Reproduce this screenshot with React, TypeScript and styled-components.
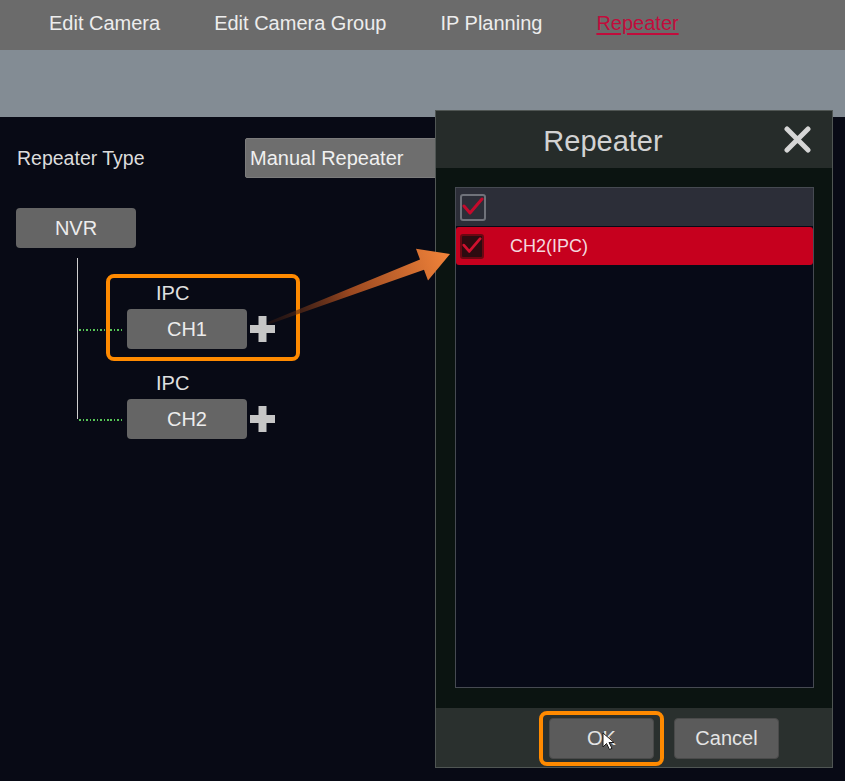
import styled, { createGlobalStyle } from "styled-components";

const GlobalStyle = createGlobalStyle`
  html,
  body {
    margin: 0;
    padding: 0;
    background: #080a15;
  }

  body {
    font-family: "Liberation Sans", Arial, sans-serif;
  }
`;

const ORANGE = "#ff8a00";
const TEXT = "#e6e6e6";

const Screen = styled.div`
  position: relative;
  width: 845px;
  height: 781px;
  overflow: hidden;
  background: #080a15;
  color: ${TEXT};
`;

const TabBar = styled.nav`
  display: flex;
  align-items: center;
  gap: 54px;
  height: 50px;
  padding: 0 0 3px 49px;
  box-sizing: border-box;
  background: #6b6b6b;
`;

const Tab = styled.span<{ $active?: boolean }>`
  font-size: 20px;
  color: ${({ $active }) => ($active ? "#c20c3c" : "#ededed")};
  text-decoration: ${({ $active }) => ($active ? "underline" : "none")};
  text-underline-offset: 3px;
`;

const SubBar = styled.div`
  height: 67px;
  background: #838c94;
`;

const Content = styled.section`
  padding-top: 21px;
`;

const TypeRow = styled.div`
  display: flex;
  align-items: center;
  height: 40px;
  padding-left: 17px;
`;

const TypeLabel = styled.span`
  width: 228px;
  font-size: 19.5px;
  color: #dcdcdc;
`;

const Select = styled.div`
  display: flex;
  align-items: center;
  width: 220px;
  height: 40px;
  box-sizing: border-box;
  padding-left: 4px;
  border: 1px solid #7c7c7c;
  border-radius: 2px;
  background: #6e6e6e;
  font-size: 20px;
  color: #f0f0f0;
`;

const NodeButton = styled.div<{ $indent?: number }>`
  display: flex;
  align-items: center;
  justify-content: center;
  width: 120px;
  height: 40px;
  margin-left: ${({ $indent }) => $indent ?? 0}px;
  border-radius: 4px;
  background: #656565;
  font-size: 20px;
  color: #ececec;
`;

const RootNode = styled(NodeButton)`
  margin-top: 30px;
`;

const Tree = styled.div`
  display: flex;
  margin: 10px 0 0 77px;
`;

const Rail = styled.div`
  width: 1px;
  margin-bottom: 20px;
  background: #cfcfcf;
`;

const Branches = styled.div`
  display: flex;
  flex-direction: column;
  gap: 24px;
  padding-top: 25px;
`;

const Branch = styled.div`
  display: flex;
  flex-direction: column;
  gap: 6px;
`;

const BranchLabel = styled.span`
  padding-left: 78px;
  font-size: 20px;
  line-height: 20px;
  color: #e0e0e0;
`;

const BranchRow = styled.div`
  display: flex;
  align-items: center;
`;

const Dots = styled.div`
  width: 43px;
  height: 2px;
  margin: 1px 5px 0 1px;
  background-image: repeating-linear-gradient(
    to right,
    #56c456 0 1.5px,
    transparent 1.5px 3.5px
  );
`;

const AddIcon = styled.svg`
  margin-left: 3px;
`;

const Highlight = styled.div`
  position: absolute;
  left: 106px;
  top: 274px;
  width: 194px;
  height: 87px;
  box-sizing: border-box;
  border: 4px solid ${ORANGE};
  border-radius: 8px;
  pointer-events: none;
`;

const Pointer = styled.svg`
  position: absolute;
  left: 260px;
  top: 240px;
  pointer-events: none;
`;

const Dialog = styled.div`
  position: absolute;
  left: 435px;
  top: 110px;
  display: flex;
  flex-direction: column;
  width: 398px;
  height: 658px;
  box-sizing: border-box;
  border: 1px solid #505654;
  background: #0b1411;
`;

const DialogHeader = styled.header`
  display: flex;
  align-items: center;
  height: 57px;
  background: #262c2a;
`;

const DialogTitle = styled.h2`
  flex: 1;
  margin: 3px 0 0;
  text-align: center;
  font-size: 29px;
  font-weight: normal;
  color: #d2d2d2;
`;

const CloseIcon = styled.svg`
  margin: 0 21px 0 14px;
`;

const DialogBody = styled.div`
  flex: 1;
  padding: 19px 18px 20px 19px;
`;

const ChannelList = styled.div`
  display: flex;
  flex-direction: column;
  gap: 1px;
  height: 100%;
  box-sizing: border-box;
  border: 1px solid #464a52;
  background: #070a17;
`;

const ListRow = styled.div<{ $selected?: boolean }>`
  display: flex;
  align-items: center;
  gap: 26px;
  height: 38px;
  padding-left: 4px;
  border-radius: ${({ $selected }) => ($selected ? "3px" : "0")};
  background: ${({ $selected }) => ($selected ? "#c6001e" : "#2c2e38")};
  font-size: 18px;
  color: #f4d8de;
`;

const CheckBox = styled.span<{ $selected?: boolean }>`
  display: flex;
  align-items: center;
  justify-content: center;
  width: ${({ $selected }) => ($selected ? 24 : 26)}px;
  height: ${({ $selected }) => ($selected ? 25 : 27)}px;
  box-sizing: border-box;
  border: 2px solid ${({ $selected }) => ($selected ? "#6a0812" : "#6f727a")};
  border-radius: 3px;
  background: ${({ $selected }) => ($selected ? "#2c0b10" : "#2c2e38")};
`;

const DialogFooter = styled.footer`
  display: flex;
  align-items: center;
  justify-content: flex-end;
  gap: 10px;
  height: 59px;
  padding: 2px 53px 0 0;
  box-sizing: border-box;
  background: #2a302e;
`;

const FocusRing = styled.div`
  position: relative;
  padding: 3px 6px;
  border: 4px solid ${ORANGE};
  border-radius: 8px;
`;

const DialogButton = styled.button`
  width: 105px;
  height: 41px;
  padding: 0;
  border: 1px solid #4a4a4a;
  border-radius: 4px;
  background: #5b5b5b;
  font-family: inherit;
  font-size: 20px;
  color: #e4e4e4;
`;

const Cursor = styled.svg`
  position: absolute;
  left: 59px;
  top: 17px;
  pointer-events: none;
`;

const Check = ({ color }: { color: string }) => (
  <svg width="22" height="20" viewBox="0 0 22 20">
    <polyline
      points="2,9 8,16 20,2"
      fill="none"
      stroke={color}
      strokeWidth="3"
      strokeLinecap="round"
      strokeLinejoin="round"
    />
  </svg>
);

const Add = () => (
  <AddIcon width="25" height="26" viewBox="0 0 25 26">
    <rect x="8.5" y="0" width="8" height="26" fill="#c6c6c6" />
    <rect x="0" y="9" width="25" height="8" fill="#c6c6c6" />
  </AddIcon>
);

const channels = [{ name: "CH1" }, { name: "CH2" }];

const tabs = ["Edit Camera", "Edit Camera Group", "IP Planning", "Repeater"];

export default function App() {
  return (
    <>
      <GlobalStyle />
      <Screen>
        <TabBar>
          {tabs.map((tab) => (
            <Tab key={tab} $active={tab === "Repeater"}>
              {tab}
            </Tab>
          ))}
        </TabBar>
        <SubBar />

        <Content>
          <TypeRow>
            <TypeLabel>Repeater Type</TypeLabel>
            <Select>Manual Repeater</Select>
          </TypeRow>

          <RootNode $indent={16}>NVR</RootNode>

          <Tree>
            <Rail />
            <Branches>
              {channels.map((ch) => (
                <Branch key={ch.name}>
                  <BranchLabel>IPC</BranchLabel>
                  <BranchRow>
                    <Dots />
                    <NodeButton>{ch.name}</NodeButton>
                    <Add />
                  </BranchRow>
                </Branch>
              ))}
            </Branches>
          </Tree>
        </Content>

        <Highlight />

        <Dialog>
          <DialogHeader>
            <DialogTitle>Repeater</DialogTitle>
            <CloseIcon width="27" height="27" viewBox="0 0 27 27">
              <path
                d="M3 3 L24 24 M24 3 L3 24"
                stroke="#d6d6d6"
                strokeWidth="5"
                strokeLinecap="round"
              />
            </CloseIcon>
          </DialogHeader>

          <DialogBody>
            <ChannelList>
              <ListRow>
                <CheckBox>
                  <Check color="#c40a2c" />
                </CheckBox>
              </ListRow>
              <ListRow $selected>
                <CheckBox $selected>
                  <Check color="#d0102e" />
                </CheckBox>
                CH2(IPC)
              </ListRow>
            </ChannelList>
          </DialogBody>

          <DialogFooter>
            <FocusRing>
              <DialogButton>OK</DialogButton>
              <Cursor width="14" height="19" viewBox="0 0 14 19">
                <path
                  d="M1 1 L1 15 L4.5 11.5 L7.5 17.5 L10 16.3 L7 10.5 L12 10.5 Z"
                  fill="#ffffff"
                  stroke="#1a1a1a"
                  strokeWidth="1"
                  strokeLinejoin="round"
                />
              </Cursor>
            </FocusRing>
            <DialogButton>Cancel</DialogButton>
          </DialogFooter>
        </Dialog>

        <Pointer width="200" height="90" viewBox="0 0 200 90">
          <defs>
            <linearGradient
              id="pointerFill"
              gradientUnits="userSpaceOnUse"
              x1="8"
              y1="83"
              x2="190"
              y2="14"
            >
              <stop offset="0" stopColor="#3a1c12" stopOpacity="0.4" />
              <stop offset="0.45" stopColor="#9a4820" />
              <stop offset="1" stopColor="#f3843a" />
            </linearGradient>
          </defs>
          <polygon
            points="8,82 160,19.6 156,8.8 190,14 168,40.6 164,29.8 8.4,84.5"
            fill="url(#pointerFill)"
          />
        </Pointer>
      </Screen>
    </>
  );
}
